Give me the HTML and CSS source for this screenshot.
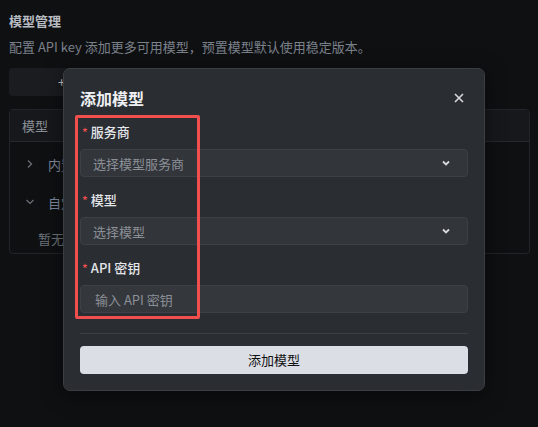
FILE: index.html
```html
<!DOCTYPE html>
<html lang="zh">
<head>
<meta charset="utf-8">
<link rel="stylesheet" href="styles.css">
</head>
<body>
<div class="page">
  <h1 class="page-title">模型管理</h1>
  <p class="page-desc">配置 API key 添加更多可用模型，预置模型默认使用稳定版本。</p>
  <div class="add-btn">+ 添加模型</div>
  <div class="table">
    <div class="thead">模型</div>
    <div class="row"><span class="chev">
      <svg width="10" height="10" viewBox="0 0 10 10"><path d="M3 1.5 L6.5 5 L3 8.5" fill="none" stroke="#6b7078" stroke-width="1.2"/></svg></span>内置模型</div>
    <div class="row"><span class="chev">
      <svg width="10" height="10" viewBox="0 0 10 10"><path d="M1.5 3 L5 6.5 L8.5 3" fill="none" stroke="#6b7078" stroke-width="1.2"/></svg></span>自定义模型</div>
    <div class="row empty">暂无自定义模型</div>
  </div>
</div>

<div class="modal">
  <div class="modal-head">
    <h2 class="modal-title">添加模型</h2>
    <svg class="close" width="10" height="10" viewBox="0 0 10 10"><path d="M1 1 L9 9 M9 1 L1 9" stroke="#d7d9de" stroke-width="1.6"/></svg>
  </div>
  <div class="form">
    <div class="field">
      <label class="label"><span class="req">*</span>服务商</label>
      <div class="select"><span class="ph">选择模型服务商</span>
        <svg width="10" height="10" viewBox="0 0 10 10"><path d="M2 3.5 L5 6.5 L8 3.5" fill="none" stroke="#d7d9de" stroke-width="1.8"/></svg></div>
    </div>
    <div class="field">
      <label class="label"><span class="req">*</span>模型</label>
      <div class="select"><span class="ph">选择模型</span>
        <svg width="10" height="10" viewBox="0 0 10 10"><path d="M2 3.5 L5 6.5 L8 3.5" fill="none" stroke="#d7d9de" stroke-width="1.8"/></svg></div>
    </div>
    <div class="field">
      <label class="label"><span class="req">*</span>API 密钥</label>
      <div class="input"><span class="ph">输入 API 密钥</span></div>
    </div>
  </div>
  <div class="divider"></div>
  <div class="submit">添加模型</div>
</div>
<div class="highlight"></div>
</body>
</html>
```

FILE: styles.css
```css
* { box-sizing: border-box; }
html, body { margin: 0; padding: 0; }
body {
  width: 538px;
  height: 427px;
  background: #0f1012;
  font-family: "Noto Sans CJK SC", "Noto Sans", sans-serif;
  overflow: hidden;
  position: relative;
}
.page {
  padding: 11px 8px 0 9px;
  display: flex;
  flex-direction: column;
}
.page-title {
  margin: 0;
  font-size: 13px;
  line-height: 20px;
  font-weight: 700;
  color: #b8bcc3;
}
.page-desc {
  margin: 6px 0 0;
  font-size: 13px;
  line-height: 20px;
  color: #7b818b;
}
.add-btn {
  margin-top: 11px;
  height: 28px;
  width: 160px;
  background: #1b1c1f;
  border-radius: 4px;
  color: #c4c7cc;
  font-size: 13px;
  line-height: 28px;
  text-align: center;
  white-space: nowrap;
}
.table {
  margin-top: 13px;
  width: 521px;
  height: 145px;
  border: 1px solid #222427;
  border-radius: 4px;
  overflow: hidden;
}
.thead {
  height: 32px;
  background: #17181b;
  border-bottom: 1px solid #26282b;
  color: #8a8f97;
  font-size: 13px;
  line-height: 32px;
  padding-left: 12px;
}
.row {
  height: 38px;
  display: flex;
  align-items: center;
  color: #7f8ba0;
  font-size: 13px;
  padding-left: 14px;
}
.row:nth-child(2) { margin-top: 3px; }
.chev { width: 24px; display: flex; align-items: center; padding-left: 1px; }
.row.empty { padding-left: 28px; color: #6e737b; height: 34px; }

.modal {
  position: absolute;
  left: 63px;
  top: 68px;
  width: 422px;
  height: 323px;
  background: #2a2d32;
  border: 1px solid #3a3d42;
  border-radius: 7px;
  box-shadow: 0 4px 20px rgba(0,0,0,0.5);
  padding: 0 16px 0 16px;
  display: flex;
  flex-direction: column;
}
.modal-head {
  height: 53px;
  display: flex;
  align-items: center;
  justify-content: space-between;
  padding-top: 4px;
}
.modal-title {
  margin: 0;
  font-size: 16px;
  font-weight: 700;
  color: #eef0f3;
}
.close { margin-right: 4px; }
.form {
  display: flex;
  flex-direction: column;
  gap: 13px;
}
.field { display: flex; flex-direction: column; gap: 7px; }
.label {
  font-size: 13px;
  line-height: 20px;
  color: #e3e5e9;
  font-weight: 500;
  padding-left: 2px;
}
.req { color: #f05050; margin-right: 3px; font-size: 12px; }
.select, .input {
  height: 28px;
  background: #32353a;
  border: 1px solid #3d4046;
  border-radius: 4px;
  display: flex;
  align-items: center;
  justify-content: space-between;
  padding: 0 16px 0 12px;
}
.input { background: #34373c; padding-left: 14px; }
.ph { font-size: 13px; color: #8b8f96; }
.divider {
  margin-top: 20px;
  height: 1px;
  background: #3b3e43;
}
.submit {
  margin-top: 12px;
  height: 28px;
  border-radius: 4px;
  background: #dcdee6;
  color: #111;
  font-size: 13px;
  line-height: 28px;
  text-align: center;
}
.highlight {
  position: absolute;
  left: 75px;
  top: 115px;
  width: 125px;
  height: 204px;
  border: 3px solid #f24e4e;
  border-radius: 2px;
}
```
